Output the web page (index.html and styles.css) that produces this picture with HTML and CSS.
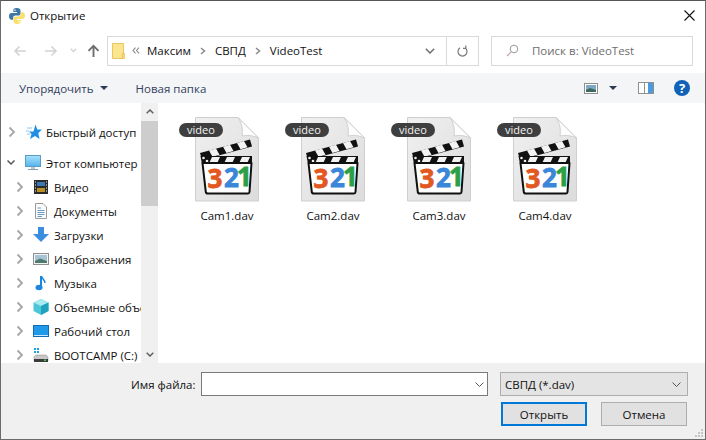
FILE: index.html
```html
<!DOCTYPE html>
<html lang="ru">
<head>
<meta charset="utf-8">
<title>Открытие</title>
<link rel="stylesheet" href="styles.css">
</head>
<body>
<svg class="defs" width="0" height="0">
  <defs>
    <linearGradient id="pg" x1="0" y1="0" x2="1" y2="1"><stop offset="0" stop-color="#f0f0f0"/><stop offset="1" stop-color="#dcdcdc"/></linearGradient>
    <linearGradient id="scr" x1="0" y1="0" x2="0" y2="1"><stop offset="0" stop-color="#a9e2fb"/><stop offset="1" stop-color="#54b4ec"/></linearGradient>
    <symbol id="file" viewBox="0 0 66 86">
      <path d="M1.500 1.500H44L64.500 22V85H1.500Z" fill="url(#pg)" stroke="#cfcfcf"/>
      <path d="M44 1.500L64.500 22C58 19 52 19 48 20C49 14 48 7 44 1.500Z" fill="#fdfdfd" stroke="#c6c6c6" stroke-width=".8"/>
      <path d="M6 37L56 23.500L58 30.500L8 44Z" fill="#111"/>
      <path d="M15 34.500L22 32.600L25.500 38.800L18.500 40.700ZM29 30.700L36 28.800L39.500 35L32.500 36.900ZM43 27L50 25L53.500 31.200L46.500 33.200Z" fill="#f2f2f2"/>
      <path d="M6.500 40H58V48H8Z" fill="#111"/>
      <path d="M18 41H26L23 47.500H15ZM33 41H41L38 47.500H30ZM48 41H56L53 47.500H45Z" fill="#f2f2f2"/>
      <circle cx="9.500" cy="42" r="1.300" fill="#eee"/><circle cx="13" cy="45" r="1.300" fill="#eee"/>
      <path d="M8.500 47H57.500L55.500 76Q55.400 77.500 54 77.500H14Q12 77.500 11.800 76Z" fill="#fff" stroke="#111" stroke-width="2" stroke-linejoin="round"/>
      <text x="13.500" y="72" class="dg dg3">3</text>
      <text x="30" y="71" class="dg dg2">2</text>
      <text x="43" y="70" class="dg dg1">1</text>
    </symbol>
    <symbol id="chev" viewBox="0 0 8 12"><path d="M1.500 1.500L6 6L1.500 10.500" fill="none" stroke="#a6a6a6" stroke-width="1.800"/></symbol>
  </defs>
</svg>
<div class="window">
  <header class="titlebar">
    <svg class="py" width="16" height="16" viewBox="0 0 16 16"><path d="M8 0C4.800 0 4.300 1.200 4.300 2.500V4H8V5H2.500C1 5 0 6.200 0 8.200S1 11.700 2.500 11.700H4.200V9.800C4.200 8.500 5.200 7.600 6.500 7.600H9.500C10.700 7.600 11.500 6.700 11.500 5.500V2.500C11.500 1.200 10.300 0 8 0Z" fill="#3f77a6"/><circle cx="6" cy="2.200" r=".8" fill="#fff"/><path d="M8 16C11.200 16 11.700 14.800 11.700 13.500V12H8V11H13.500C15 11 16 9.800 16 7.800S15 4.300 13.500 4.300H11.800V6.200C11.800 7.500 10.800 8.400 9.500 8.400H6.500C5.300 8.400 4.500 9.300 4.500 10.500V13.500C4.500 14.800 5.700 16 8 16Z" fill="#fbdf6e"/><circle cx="10" cy="13.800" r=".8" fill="#fff"/></svg>
    <span class="title">Открытие</span>
    <svg class="close" width="11" height="11" viewBox="0 0 11 11"><path d="M.5 .5L10.500 10.500M10.500 .5L.5 10.500" stroke="#111" stroke-width="1.100"/></svg>
  </header>

  <div class="navrow">
    <div class="navbtns">
      <svg width="14" height="12" viewBox="0 0 14 12"><path d="M13 6H2M6.500 1.500L2 6L6.500 10.500" fill="none" stroke="#d2d2d2" stroke-width="1.600"/></svg>
      <svg width="14" height="12" viewBox="0 0 14 12"><path d="M1 6H12M7.500 1.500L12 6L7.500 10.500" fill="none" stroke="#d2d2d2" stroke-width="1.600"/></svg>
      <svg width="7" height="5" viewBox="0 0 7 5"><path d="M.7 .7L3.500 3.500L6.300 .7" fill="none" stroke="#d2d2d2" stroke-width="1.300"/></svg>
      <svg width="13" height="13" viewBox="0 0 13 13"><path d="M6.500 13V2M1.500 6.800L6.500 1.800L11.500 6.800" fill="none" stroke="#6e6e6e" stroke-width="1.900"/></svg>
    </div>
    <div class="addr">
      <svg class="folder" width="13" height="16" viewBox="0 0 13 16"><path d="M.5 .5H11.500V15.500H.5Z" fill="#fce58f" stroke="#e9c75e"/><path d="M10 10.500H12.500V15.500H10Z" fill="#f7d774" stroke="#e2bb4c" stroke-width=".6"/></svg>
      <svg class="more" width="8" height="7" viewBox="0 0 8 7"><path d="M3.500 .7L1 3.500L3.500 6.300M7 .7L4.500 3.500L7 6.300" fill="none" stroke="#8a8a8a" stroke-width="1.100"/></svg>
      <span class="crumb">Максим</span>
      <svg class="sep" width="6" height="8" viewBox="0 0 6 8"><path d="M1 1L4.500 4L1 7" fill="none" stroke="#8a8a8a" stroke-width="1.500"/></svg>
      <span class="crumb">СВПД</span>
      <svg class="sep" width="6" height="8" viewBox="0 0 6 8"><path d="M1 1L4.500 4L1 7" fill="none" stroke="#8a8a8a" stroke-width="1.500"/></svg>
      <span class="crumb">VideoTest</span>
      <svg class="addr-drop" width="10" height="6" viewBox="0 0 10 6"><path d="M.8 .8L5 5L9.200 .8" fill="none" stroke="#707070" stroke-width="1.500"/></svg>
      <div class="refresh">
        <svg width="11" height="12" viewBox="0 0 11 12"><path d="M3 2.800A4.500 4.500 0 1 0 8 2.800M2.200 .5V3.400H5" fill="none" stroke="#7a7a7a" stroke-width="1.200" transform="matrix(-1 0 0 1 11 0)"/></svg>
      </div>
    </div>
    <div class="search">
      <svg width="13" height="13" viewBox="0 0 13 13"><circle cx="8" cy="5" r="3.800" fill="none" stroke="#9a9a9a"/><path d="M5 8L1 12" stroke="#c9a0a0" stroke-width="1.100"/></svg>
      <span>Поиск в: VideoTest</span>
    </div>
  </div>

  <div class="toolbar">
    <span class="tool organize">Упорядочить<i class="caret"></i></span>
    <span class="tool">Новая папка</span>
    <div class="tool-right">
      <svg width="14" height="11" viewBox="0 0 14 11"><rect x=".5" y=".5" width="13" height="10" fill="#fff" stroke="#8f8f8f"/><rect x="2" y="2" width="10" height="7" fill="#7ea8c4"/><path d="M2 7L6 5L12 7V9H2Z" fill="#3e6a5e"/></svg>
      <i class="caret view-caret"></i>
      <svg class="pane" width="16" height="12" viewBox="0 0 16 12"><rect x=".5" y=".5" width="15" height="11" fill="#fff" stroke="#8f8f8f"/><rect x="10" y="1" width="5" height="10" fill="#4a9ae0"/><path d="M6.500 1V11" stroke="#8f8f8f"/></svg>
      <svg class="help" width="16" height="16" viewBox="0 0 16 16"><circle cx="8" cy="8" r="8" fill="#0f62b8"/><text x="8" y="12.500" text-anchor="middle" class="help-q">?</text></svg>
    </div>
  </div>

  <div class="main">
    <nav class="tree">
      <div class="tree-list">
        <div class="row row-quick"><svg class="tw" width="8" height="12"><use href="#chev"/></svg><svg class="ic" width="16" height="16" viewBox="0 0 16 16"><path d="M9.500 .5L11.300 5.500H16L12.300 9L13.500 15L9 12L4 15L5.500 10L3 7.500H7.500Z" fill="#1f8fe6"/><path d="M1 4H6M0 7H3M1 10H4" stroke="#8cc8f2"/></svg><span>Быстрый доступ</span></div>
        <div class="row row-pc"><svg class="tw" width="8" height="12" viewBox="0 0 8 12"><path d="M.5 3.500L4 7L7.500 3.500" fill="none" stroke="#555" stroke-width="1.500"/></svg><svg class="ic" width="16" height="16" viewBox="0 0 16 16"><rect x=".5" y=".5" width="15" height="11" fill="url(#scr)" stroke="#5c9cc4"/><path d="M6 12H10V14H6Z" fill="#b8c8d0"/><path d="M3 14.500H13" stroke="#8ba0ac"/></svg><span>Этот компьютер</span></div>
        <div class="row sub"><svg class="tw" width="8" height="12"><use href="#chev"/></svg><svg class="ic" width="16" height="16" viewBox="0 0 16 16"><rect x="1" y="1" width="14" height="14" fill="#2a2a2a"/><rect x="4" y="3" width="8" height="4" fill="#3a78b8"/><rect x="4" y="9" width="8" height="4" fill="#b89028"/><path d="M2 3H3M2 6H3M2 9H3M2 12H3M13 3H14M13 6H14M13 9H14M13 12H14" stroke="#eee"/></svg><span>Видео</span></div>
        <div class="row sub"><svg class="tw" width="8" height="12"><use href="#chev"/></svg><svg class="ic" width="16" height="16" viewBox="0 0 16 16"><path d="M2.500 .5H10L13.500 4V15.500H2.500Z" fill="#fbfbfb" stroke="#9a9a9a"/><path d="M4.500 5H8M4.500 7.500H11.500M4.500 9.500H11.500M4.500 11.500H11.500M4.500 13.500H9" stroke="#6a9ac0"/></svg><span>Документы</span></div>
        <div class="row sub"><svg class="tw" width="8" height="12"><use href="#chev"/></svg><svg class="ic" width="16" height="16" viewBox="0 0 16 16"><path d="M5 0H11V7H16L8 15L0 7H5Z" fill="#3a8ee0"/></svg><span>Загрузки</span></div>
        <div class="row sub"><svg class="tw" width="8" height="12"><use href="#chev"/></svg><svg class="ic" width="16" height="16" viewBox="0 0 16 16"><rect x=".5" y="2.500" width="15" height="11" fill="#f4f4f4" stroke="#8f8f8f"/><rect x="2" y="4" width="12" height="8" fill="#a6c4d6"/><path d="M2 10L7 7.500L14 10V12H2Z" fill="#4e7a6c"/></svg><span>Изображения</span></div>
        <div class="row sub"><svg class="tw" width="8" height="12"><use href="#chev"/></svg><svg class="ic" width="16" height="16" viewBox="0 0 16 16"><path d="M8 1V12.500" stroke="#1a86e0" stroke-width="2"/><ellipse cx="6" cy="12.500" rx="3.500" ry="2.800" fill="#1a86e0"/><path d="M8.500 1C9 4 12 5 12 8" fill="none" stroke="#1a86e0" stroke-width="1.500"/></svg><span>Музыка</span></div>
        <div class="row sub"><svg class="tw" width="8" height="12"><use href="#chev"/></svg><svg class="ic" width="16" height="16" viewBox="0 0 16 16"><path d="M8 0L15.500 3.500V12L8 16L.5 12V3.500Z" fill="#4cc6d8"/><path d="M.5 3.500L8 7L15.500 3.500L8 0Z" fill="#a8ecf0"/><path d="M8 7V16L15.500 12V3.500Z" fill="#1fa2bc"/></svg><span>Объемные объекты</span></div>
        <div class="row sub"><svg class="tw" width="8" height="12"><use href="#chev"/></svg><svg class="ic" width="16" height="16" viewBox="0 0 16 16"><rect x=".5" y="2.500" width="15" height="11" fill="#1f9ae8" stroke="#0f6cb0"/><path d="M1 12.500H15" stroke="#cfe8f8"/></svg><span>Рабочий стол</span></div>
        <div class="row sub"><svg class="tw" width="8" height="12"><use href="#chev"/></svg><svg class="ic" width="16" height="16" viewBox="0 0 16 16"><path d="M1 1H3V3H1ZM4 1H6V3H4ZM1 4H3V6H1ZM4 4H6V6H4Z" fill="#1aa0e8"/><path d="M1 10L3 8H13L15 10V14H1Z" fill="#c8c8c8" stroke="#8a8a8a" stroke-width=".5"/><rect x="1" y="12" width="14" height="3" fill="#3a3a3a"/><rect x="11" y="12.500" width="2" height="1.500" fill="#3fd04a"/></svg><span>BOOTCAMP (C:)</span></div>
      </div>
      <div class="scroll">
        <svg class="sc-btn" width="8" height="5" viewBox="0 0 8 5"><path d="M.7 4.300L4 1L7.300 4.300" fill="none" stroke="#606060" stroke-width="1.500"/></svg>
        <div class="thumb"></div>
        <svg class="sc-btn sc-down" width="8" height="5" viewBox="0 0 8 5"><path d="M.7 .7L4 4L7.300 .7" fill="none" stroke="#606060" stroke-width="1.500"/></svg>
      </div>
    </nav>
    <section class="files">
      <figure class="file"><div class="thumbbox"><svg class="doc" width="66" height="86"><use href="#file"/></svg><span class="tag">video</span></div><figcaption>Cam1.dav</figcaption></figure>
      <figure class="file"><div class="thumbbox"><svg class="doc" width="66" height="86"><use href="#file"/></svg><span class="tag">video</span></div><figcaption>Cam2.dav</figcaption></figure>
      <figure class="file"><div class="thumbbox"><svg class="doc" width="66" height="86"><use href="#file"/></svg><span class="tag">video</span></div><figcaption>Cam3.dav</figcaption></figure>
      <figure class="file"><div class="thumbbox"><svg class="doc" width="66" height="86"><use href="#file"/></svg><span class="tag">video</span></div><figcaption>Cam4.dav</figcaption></figure>
    </section>
  </div>

  <footer class="footer">
    <div class="f-row">
      <label class="f-label">Имя файла:</label>
      <div class="name-input"><svg width="9" height="5" viewBox="0 0 9 5"><path d="M.5 .5L4.500 4.500L8.500 .5" fill="none" stroke="#555" stroke-width="1"/></svg></div>
      <div class="type-select"><span>СВПД (*.dav)</span><svg width="9" height="5" viewBox="0 0 9 5"><path d="M.5 .5L4.500 4.500L8.500 .5" fill="none" stroke="#555" stroke-width="1"/></svg></div>
    </div>
    <div class="f-buttons">
      <button class="btn primary">Открыть</button>
      <button class="btn">Отмена</button>
    </div>
    <svg class="grip" width="10" height="10" viewBox="0 0 10 10"><path d="M7 1h2v2H7zM4 4h2v2H4zM7 4h2v2H7zM1 7h2v2H1zM4 7h2v2H4zM7 7h2v2H7z" fill="#c4c4c4"/></svg>
  </footer>
</div>
</body>
</html>
```

FILE: styles.css
```css
* { box-sizing: border-box; }
html, body { margin: 0; padding: 0; }
body { width: 706px; height: 440px; overflow: hidden; background: #fff; font: 11.5px "Open Sans", "Noto Sans", "DejaVu Sans", sans-serif; color: #111; }
.defs { position: absolute; }
svg { display: block; flex: none; }

.window { width: 706px; height: 440px; display: flex; flex-direction: column; border: 1px solid #6b6b6b; border-top-color: #555; background: #fff; }

.titlebar { height: 29px; display: flex; align-items: center; padding: 0 0 0 8px; }
.title { margin-left: 5px; }
.close { margin-left: auto; margin-right: 10px; }

.navrow { height: 29px; margin-top: 6px; display: flex; align-items: center; }
.navbtns { width: 106px; display: flex; align-items: center; padding-left: 12px; }
.navbtns svg:nth-child(2) { margin-left: 17px; }
.navbtns svg:nth-child(3) { margin-left: 12px; }
.navbtns svg:nth-child(4) { margin-left: 10px; }
.addr { width: 372px; height: 30px; border: 1px solid #d9d9d9; display: flex; align-items: center; padding-left: 4px; }
.folder { margin-right: 7px; }
.more { margin-right: 7px; }
.sep { margin: 0 9px; }
.addr-drop { margin-left: auto; margin-right: 11px; }
.refresh { width: 32px; height: 100%; border-left: 1px solid #d9d9d9; display: flex; align-items: center; justify-content: center; }
.search { width: 202px; height: 30px; margin-left: 12px; border: 1px solid #d9d9d9; display: flex; align-items: center; padding-left: 14px; color: #6d6d6d; }
.search span { margin-left: 13px; }

.toolbar { height: 30px; margin-top: 8px; background: #f4f5f7; display: flex; align-items: center; padding: 0 15px 0 18px; color: #33415c; }
.tool { display: flex; align-items: center; }
.organize { margin-right: 28px; }
.caret { display: block; margin-left: 6px; width: 0; height: 0; border: 4px solid transparent; border-top: 4px solid #2b3a55; border-bottom: 0; }
.tool-right { margin-left: auto; display: flex; align-items: center; }
.view-caret { margin-left: 11px; }
.pane { margin-left: 21px; }
.help { margin-left: 20px; }
.help-q { fill: #fff; font: bold 13px "Open Sans", sans-serif; }

.main { flex: 1; min-height: 0; display: flex; }
.tree { width: 157px; display: flex; }
.tree-list { width: 140px; overflow: hidden; padding-top: 17px; }
.row { height: 24px; display: flex; align-items: center; white-space: nowrap; }
.row-quick { padding-left: 7px; }
.row-quick .tw { margin-right: 10px; }
.row-quick .ic { margin-right: 4px; }
.row-pc { margin-top: 7px; padding-left: 6px; }
.row-pc .tw { margin-right: 10px; }
.row-pc .ic { margin-right: 5px; }
.row.sub { padding-left: 15px; }
.row.sub .tw { margin-right: 9px; }
.row.sub .ic { margin-right: 5px; }

.scroll { width: 17px; background: #f0f0f0; display: flex; flex-direction: column; align-items: center; }
.sc-btn { margin: 6px 0 7px; }
.thumb { width: 100%; height: 85px; background: #cdcdcd; }
.sc-down { margin: auto 0 6px; }

.files { flex: 1; display: flex; align-items: flex-start; padding: 13px 0 0 15px; }
.file { margin: 0; width: 106px; }
.thumbbox { position: relative; height: 86px; padding-left: 21px; }
.tag { position: absolute; left: 6px; top: 7px; background: #3f3f3f; color: #f4f4f4; border-radius: 7px; height: 14px; line-height: 14px; padding: 0 8px; font-size: 11px; }
.dg { font: bold 26px "Open Sans", sans-serif; stroke-width: .8px; }
.dg3 { fill: #e2581f; stroke: #e2581f; }
.dg2 { fill: #3a86d8; stroke: #3a86d8; }
.dg1 { fill: #2b9f48; stroke: #2b9f48; }
figcaption { margin-top: 6px; padding-left: 2px; text-align: center; }

.footer { height: 76px; background: #f0f0f0; position: relative; padding: 9px 0 0 130px; }
.f-row { display: flex; align-items: center; height: 24px; }
.f-label { width: 70px; }
.name-input { width: 287px; height: 24px; border: 1px solid #7a7a7a; background: #fff; display: flex; align-items: center; justify-content: flex-end; padding-right: 3px; }
.type-select { width: 188px; height: 24px; margin-left: 12px; border: 1px solid #adadad; background: #e4e4e4; display: flex; align-items: center; justify-content: space-between; padding: 0 6px 0 4px; }
.f-buttons { display: flex; justify-content: flex-end; padding-right: 18px; margin-top: 6px; gap: 14px; }
.btn { width: 86px; height: 24px; border: 1px solid #adadad; background: #e1e1e1; font: 11.5px "Open Sans", sans-serif; color: #111; padding: 0; }
.btn.primary { border: 2px solid #0078d7; }
.grip { position: absolute; right: 1px; bottom: 1px; }
```
